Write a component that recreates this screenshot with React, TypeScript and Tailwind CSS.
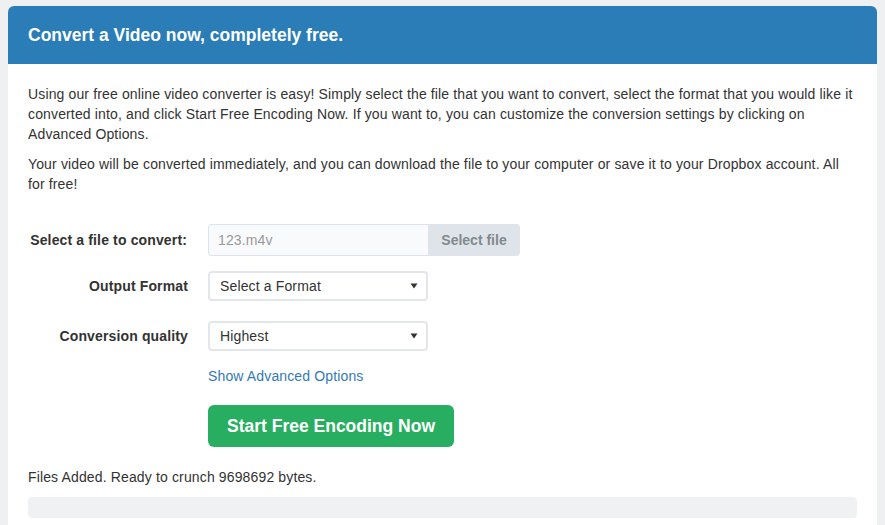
import React from "react";

function Arrow() {
  return (
    <svg width="8" height="6" viewBox="0 0 8 6" className="absolute right-[8px] top-1/2 -translate-y-1/2">
      <path d="M0.5 0.5 L7.5 0.5 L4 5.5 Z" fill="#333" />
    </svg>
  );
}

export default function App() {
  return (
    <div className="min-h-[525px] bg-[#eef0f2] pt-[6px] px-2 text-[#333]" style={{ fontFamily: '"Liberation Sans", Arial, sans-serif' }}>
      <div className="bg-white rounded-t-[6px] overflow-hidden w-[869px]">
        <div className="bg-[#2a7db6] h-[58px] flex items-center px-5">
          <h1 className="text-white font-bold text-[17.5px]">Convert a Video now, completely free.</h1>
        </div>
        <div className="px-5 pt-5 pb-[7px] text-[14px] leading-[20px] tracking-[0.14px]">
          <p>
            Using our free online video converter is easy! Simply select the file that you want to convert, select the format that you would like it converted into, and click Start Free Encoding Now. If you want to, you can customize the conversion settings by clicking on Advanced Options.
          </p>
          <p className="mt-[10px]">
            Your video will be converted immediately, and you can download the file to your computer or save it to your Dropbox account. All for free!
          </p>

          <div className="mt-[30px] flex items-center">
            <label className="w-[160px] text-right font-bold pr-[1px]">Select a file to convert:</label>
            <div className="ml-5 flex h-[32px]">
              <div className="w-[220px] bg-[#f9fafb] border border-[#dde3ea] border-r-0 rounded-l-[4px] flex items-center px-[9px] text-[#999]">123.m4v</div>
              <div className="w-[92px] bg-[#dfe4ea] rounded-r-[4px] flex items-center justify-center font-bold text-[#7f8c8d] tracking-normal">Select file</div>
            </div>
          </div>

          <div className="mt-[15px] flex items-center">
            <label className="w-[160px] text-right font-bold">Output Format</label>
            <div className="ml-5 relative w-[220px] h-[30px] border-2 border-[#e3e7ec] rounded-[4px] flex items-center px-[10px] bg-white">
              Select a Format
              <Arrow />
            </div>
          </div>

          <div className="mt-[20px] flex items-center">
            <label className="w-[160px] text-right font-bold">Conversion quality</label>
            <div className="ml-5 relative w-[220px] h-[30px] border-2 border-[#e3e7ec] rounded-[4px] flex items-center px-[10px] bg-white">
              Highest
              <Arrow />
            </div>
          </div>

          <div className="mt-[15px] ml-[180px]">
            <a className="text-[#337ab7]">Show Advanced Options</a>
          </div>

          <div className="mt-[19px] ml-[180px]">
            <button className="w-[246px] h-[42px] bg-[#27ae60] rounded-[6px] text-white font-bold text-[17.5px] tracking-normal">Start Free Encoding Now</button>
          </div>

          <p className="mt-[20px]">Files Added. Ready to crunch 9698692 bytes.</p>

          <div className="mt-[10px] h-[21px] bg-[#f0f1f3] rounded-[4px]"></div>
        </div>
      </div>
    </div>
  );
}
